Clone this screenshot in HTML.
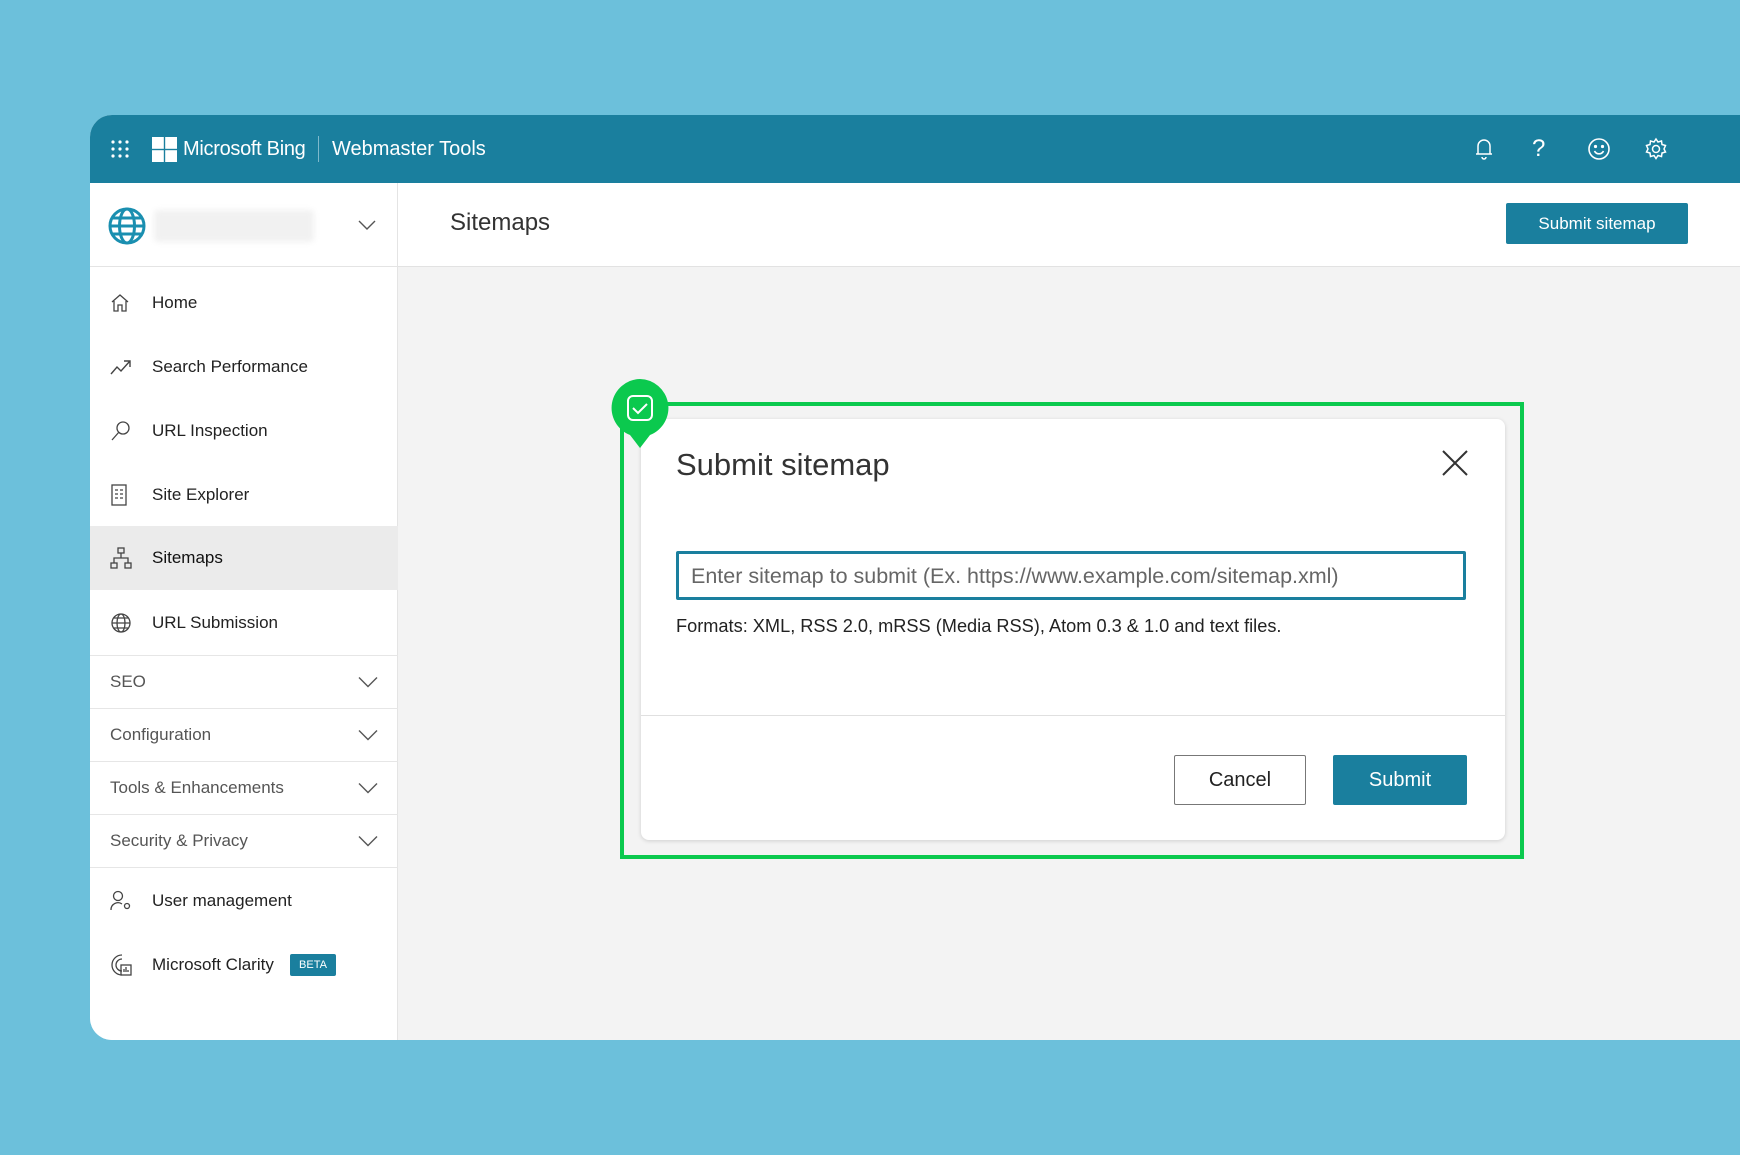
<!DOCTYPE html>
<html><head><meta charset="utf-8"><style>
*{box-sizing:border-box;margin:0;padding:0}
body{width:1740px;height:1155px;overflow:hidden;background:#6cc0db;font-family:"Liberation Sans",Arial,sans-serif;position:relative}
.panel{position:absolute;left:90px;top:115px;width:1650px;height:925px;background:#f3f3f3;border-radius:22px 0 0 22px;overflow:hidden}
.top{position:absolute;left:0;top:0;width:100%;height:68px;background:#1a7f9e;color:#fff}
.side{position:absolute;left:0;top:68px;width:308px;height:857px;background:#fff;border-right:1px solid #e4e4e4}
.hdr{position:absolute;left:308px;top:68px;right:0;height:84px;background:#fff;border-bottom:1px solid #e2e2e2}
.abs{position:absolute}
.nav{position:absolute;left:0;width:308px;height:64px;font-size:17px;color:#222}
.nav span{position:absolute;left:62px;top:50%;transform:translateY(-50%)}
.nav svg{position:absolute;left:20px;top:50%;transform:translateY(-50%)}
.sec{position:absolute;left:0;width:308px;height:53px;font-size:17px;color:#555;border-top:1px solid #e6e6e6}
.sec span{position:absolute;left:20px;top:50%;transform:translateY(-50%)}
.sec svg{position:absolute;right:20px;top:50%;transform:translateY(-50%)}
</style></head><body>
<div class="panel">
 <div class="top">
  <svg class="abs" style="left:20px;top:24px" width="20" height="20" viewBox="0 0 20 20" fill="#fff"><circle cx="3" cy="3" r="1.6"/><circle cx="10" cy="3" r="1.6"/><circle cx="17" cy="3" r="1.6"/><circle cx="3" cy="10" r="1.6"/><circle cx="10" cy="10" r="1.6"/><circle cx="17" cy="10" r="1.6"/><circle cx="3" cy="17" r="1.6"/><circle cx="10" cy="17" r="1.6"/><circle cx="17" cy="17" r="1.6"/></svg>
  <svg class="abs" style="left:62px;top:22px" width="25" height="25" viewBox="0 0 25 25" fill="#fff"><rect x="0" y="0" width="11.8" height="11.8"/><rect x="13.2" y="0" width="11.8" height="11.8"/><rect x="0" y="13.2" width="11.8" height="11.8"/><rect x="13.2" y="13.2" width="11.8" height="11.8"/></svg>
  <div class="abs" style="left:93px;top:23px;font-size:20px;letter-spacing:-0.3px">Microsoft Bing</div>
  <div class="abs" style="left:228px;top:21px;width:1px;height:26px;background:#7fb9cc"></div>
  <div class="abs" style="left:242px;top:23px;font-size:20px">Webmaster Tools</div>
  <svg class="abs" style="left:1384px;top:22px" width="20" height="24" viewBox="0 0 20 24" fill="none" stroke="#fff" stroke-width="1.5"><path d="M4 17V9a6 6 0 0 1 12 0v8H4zM2 17h16M8 20a2 2 0 0 0 4 0"/></svg>
  <div class="abs" style="left:1442px;top:20px;font-size:24px;font-weight:300">?</div>
  <svg class="abs" style="left:1497px;top:22px" width="24" height="24" viewBox="0 0 24 24" fill="none" stroke="#fff" stroke-width="1.6"><circle cx="12" cy="12" r="10"/><circle cx="8.5" cy="9.5" r=".8" fill="#fff"/><circle cx="15.5" cy="9.5" r=".8" fill="#fff"/><path d="M7.5 14a5 5 0 0 0 9 0"/></svg>
  <svg class="abs" style="left:1554px;top:22px" width="24" height="24" viewBox="0 0 24 24" fill="none" stroke="#fff" stroke-width="1.5"><path d="M12 2l2 3 3.5-1 .5 3.5 3.5 1-1.5 3.5 1.5 3-3.5 1-.5 3.5-3.5-1-2 3-2-3-3.5 1-.5-3.5-3.5-1 1.5-3-1.5-3.5 3.5-1L6.5 4 10 5z"/><circle cx="12" cy="12" r="3.5"/></svg>
 </div>
 <div class="side">
  <div class="abs" style="left:0;top:0;width:308px;height:84px;border-bottom:1px solid #e4e4e4">
   <svg class="abs" style="left:18px;top:24px" width="38" height="38" viewBox="0 0 38 38" fill="none" stroke="#1a8fb0" stroke-width="3"><circle cx="19" cy="19" r="17"/><ellipse cx="19" cy="19" rx="7.5" ry="17"/><path d="M2 19h34M5 11h28M5 27h28"/></svg>
   <div class="abs" style="left:64px;top:27px;width:160px;height:32px;background:#f1f1f1;border-radius:4px;filter:blur(3px)"></div>
   <svg class="abs" style="left:268px;top:37px" width="18" height="10" viewBox="0 0 18 10" fill="none" stroke="#555" stroke-width="1.4"><path d="M1 1l8 8 8-8"/></svg>
  </div>
  <div class="nav" style="top:88px"><svg width="20" height="20" viewBox="0 0 20 20" fill="none" stroke="#444" stroke-width="1.3"><path d="M2 9l8-7 8 7M4 8v10h4v-6h4v6h4V8"/></svg><span>Home</span></div>
  <div class="nav" style="top:152px"><svg width="22" height="16" viewBox="0 0 22 16" fill="none" stroke="#444" stroke-width="1.4"><path d="M1 15l6-7 4 4 9-10M14 2h6v6"/></svg><span>Search Performance</span></div>
  <div class="nav" style="top:216px"><svg width="22" height="22" viewBox="0 0 22 22" fill="none" stroke="#444" stroke-width="1.3"><circle cx="13" cy="8" r="6"/><path d="M9 12L2 20"/></svg><span>URL Inspection</span></div>
  <div class="nav" style="top:280px"><svg width="18" height="22" viewBox="0 0 18 22" fill="none" stroke="#444" stroke-width="1.3"><rect x="2" y="1" width="14" height="20"/><path d="M5 6h3M10 6h3M5 10h3M10 10h3M5 14h3M10 14h3"/></svg><span>Site Explorer</span></div>
  <div class="nav" style="top:343px;background:#ebebeb"><svg width="22" height="22" viewBox="0 0 22 22" fill="none" stroke="#444" stroke-width="1.3"><rect x="8" y="1" width="6" height="5"/><rect x="1" y="16" width="6" height="5"/><rect x="15" y="16" width="6" height="5"/><path d="M11 6v5M4 16v-5h14v5"/></svg><span style="color:#111">Sitemaps</span></div>
  <div class="nav" style="top:408px"><svg width="22" height="22" viewBox="0 0 22 22" fill="none" stroke="#444" stroke-width="1.3"><circle cx="11" cy="11" r="9"/><ellipse cx="11" cy="11" rx="4" ry="9"/><path d="M2 11h18M4 6h14M4 16h14"/></svg><span>URL Submission</span></div>
  <div class="sec" style="top:472px"><span>SEO</span><svg width="20" height="11" viewBox="0 0 20 11" fill="none" stroke="#555" stroke-width="1.4"><path d="M1 1l9 9 9-9"/></svg></div>
  <div class="sec" style="top:525px"><span>Configuration</span><svg width="20" height="11" viewBox="0 0 20 11" fill="none" stroke="#555" stroke-width="1.4"><path d="M1 1l9 9 9-9"/></svg></div>
  <div class="sec" style="top:578px"><span>Tools &amp; Enhancements</span><svg width="20" height="11" viewBox="0 0 20 11" fill="none" stroke="#555" stroke-width="1.4"><path d="M1 1l9 9 9-9"/></svg></div>
  <div class="sec" style="top:631px;border-bottom:1px solid #e6e6e6;height:54px"><span>Security &amp; Privacy</span><svg width="20" height="11" viewBox="0 0 20 11" fill="none" stroke="#555" stroke-width="1.4"><path d="M1 1l9 9 9-9"/></svg></div>
  <div class="nav" style="top:686px"><svg width="24" height="22" viewBox="0 0 24 22" fill="none" stroke="#444" stroke-width="1.3"><circle cx="8" cy="6" r="4.5"/><path d="M1 20a7 7 0 0 1 11-6"/><circle cx="17" cy="16" r="2.5"/></svg><span>User management</span></div>
  <div class="nav" style="top:750px"><svg width="24" height="24" viewBox="0 0 24 24" fill="none" stroke="#444" stroke-width="1.3"><path d="M12 2a10 10 0 1 0 0 20M12 6a6 6 0 1 0 0 12"/><rect x="11" y="12" width="10" height="10"/><path d="M14 19v-3M16 19v-5M18 19v-2"/></svg><span>Microsoft Clarity</span><div class="abs" style="left:200px;top:21px;width:46px;height:22px;background:#1a7f9e;color:#fff;font-size:11px;line-height:22px;text-align:center;border-radius:2px">BETA</div></div>
 </div>
 <div class="hdr">
  <div class="abs" style="left:52px;top:26px;font-size:24px;color:#333">Sitemaps</div>
  <div class="abs" style="left:1108px;top:20px;width:182px;height:41px;background:#1a7f9e;color:#fff;font-size:17px;line-height:41px;text-align:center;border-radius:2px">Submit sitemap</div>
 </div>
</div>
<!-- dialog -->
<div class="abs" style="left:620px;top:402px;width:904px;height:457px;border:4px solid #0bc94e"></div>
<div class="abs" style="left:641px;top:419px;width:864px;height:421px;background:#fff;border-radius:8px;box-shadow:0 1px 4px rgba(0,0,0,.15)">
 <div class="abs" style="left:35px;top:28px;font-size:31px;color:#333">Submit sitemap</div>
 <svg class="abs" style="left:801px;top:31px" width="26" height="26" viewBox="0 0 26 26" stroke="#333" stroke-width="2"><path d="M1 1l24 24M25 1L1 25"/></svg>
 <div class="abs" style="left:35px;top:132px;width:790px;height:49px;border:3px solid #1a7f9e;border-radius:2px;font-size:21.5px;color:#666;padding:10px 0 0 12px;white-space:nowrap">Enter sitemap to submit (Ex. https://www.example.com/sitemap.xml)</div>
 <div class="abs" style="left:35px;top:197px;font-size:18.2px;color:#222;white-space:nowrap">Formats: XML, RSS 2.0, mRSS (Media RSS), Atom 0.3 &amp; 1.0 and text files.</div>
 <div class="abs" style="left:0;top:296px;width:864px;height:1px;background:#e0e0e0"></div>
 <div class="abs" style="left:533px;top:336px;width:132px;height:50px;border:1px solid #777;border-radius:2px;font-size:20px;line-height:48px;text-align:center;color:#222">Cancel</div>
 <div class="abs" style="left:692px;top:336px;width:134px;height:50px;background:#1a7f9e;border-radius:2px;font-size:20px;line-height:50px;text-align:center;color:#fff">Submit</div>
</div>
<svg class="abs" style="left:610px;top:378px" width="60" height="72" viewBox="0 0 60 72"><path d="M30 1a29 29 0 0 1 10 56L30 70 20 57A29 29 0 0 1 30 1z" fill="#0bc94e"/><rect x="18" y="18" width="24" height="24" rx="5" fill="none" stroke="#fff" stroke-width="2"/><path d="M23 30l5 5 9-9" fill="none" stroke="#fff" stroke-width="2"/></svg>
</body></html>
